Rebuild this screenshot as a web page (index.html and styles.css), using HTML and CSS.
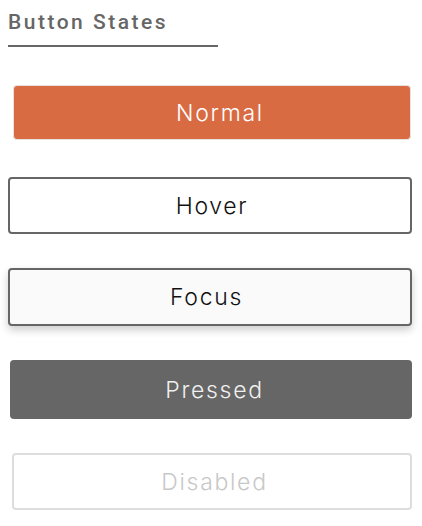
FILE: index.html
```html
<!DOCTYPE html>
<html>
<head>
<meta charset="utf-8">
<link rel="stylesheet" href="styles.css">
</head>
<body>
<div class="page">
  <h2 class="title">Button States</h2>
  <div class="list">
    <button class="btn normal">Normal</button>
    <button class="btn hover">Hover</button>
    <button class="btn focus">Focus</button>
    <button class="btn pressed">Pressed</button>
    <button class="btn disabled" disabled>Disabled</button>
  </div>
</div>
</body>
</html>
```
FILE: styles.css
```css
html, body {
  margin: 0;
  padding: 0;
  background: #ffffff;
}
.page {
  padding: 8px;
  width: 404px;
}
.title {
  margin: 0;
  display: inline-block;
  width: 210px;
  font-family: Roboto, "Liberation Sans", sans-serif;
  font-weight: 500;
  font-size: 21px;
  line-height: 29px;
  letter-spacing: 2.5px;
  color: #666666;
  padding-bottom: 8px;
  border-bottom: 2px solid #666666;
}
.list {
  display: flex;
  flex-direction: column;
  margin-top: 38px;
}
.btn {
  box-sizing: border-box;
  font-family: Inter, "Liberation Sans", sans-serif;
  font-weight: 300;
  font-size: 23px;
  letter-spacing: 1.7px;
  border-radius: 4px;
  padding: 0;
  display: flex;
  align-items: center;
  justify-content: center;
}
.normal {
  margin: 0 1px 0 5px;
  padding-left: 16px;
  height: 55px;
  background: #d96b43;
  color: #ffffff;
  border: 1px solid #e7e2df;
}
.hover {
  margin-top: 37px;
  padding-left: 4px;
  height: 57px;
  background: #ffffff;
  color: #111111;
  border: 2px solid #666666;
}
.focus {
  margin-top: 34px;
  padding-right: 7px;
  height: 58px;
  background: #fafafa;
  color: #111111;
  border: 2px solid #666666;
  box-shadow: 0 4px 8px rgba(0, 0, 0, 0.2);
}
.pressed {
  margin: 34px 0 0 2px;
  padding-left: 7px;
  height: 59px;
  background: #666666;
  color: #f0f0f0;
  border: none;
}
.disabled {
  margin: 34px 0 0 4px;
  padding-left: 5px;
  height: 57px;
  background: #ffffff;
  color: #c8c8c8;
  border: 2px solid #dddddd;
}
```
